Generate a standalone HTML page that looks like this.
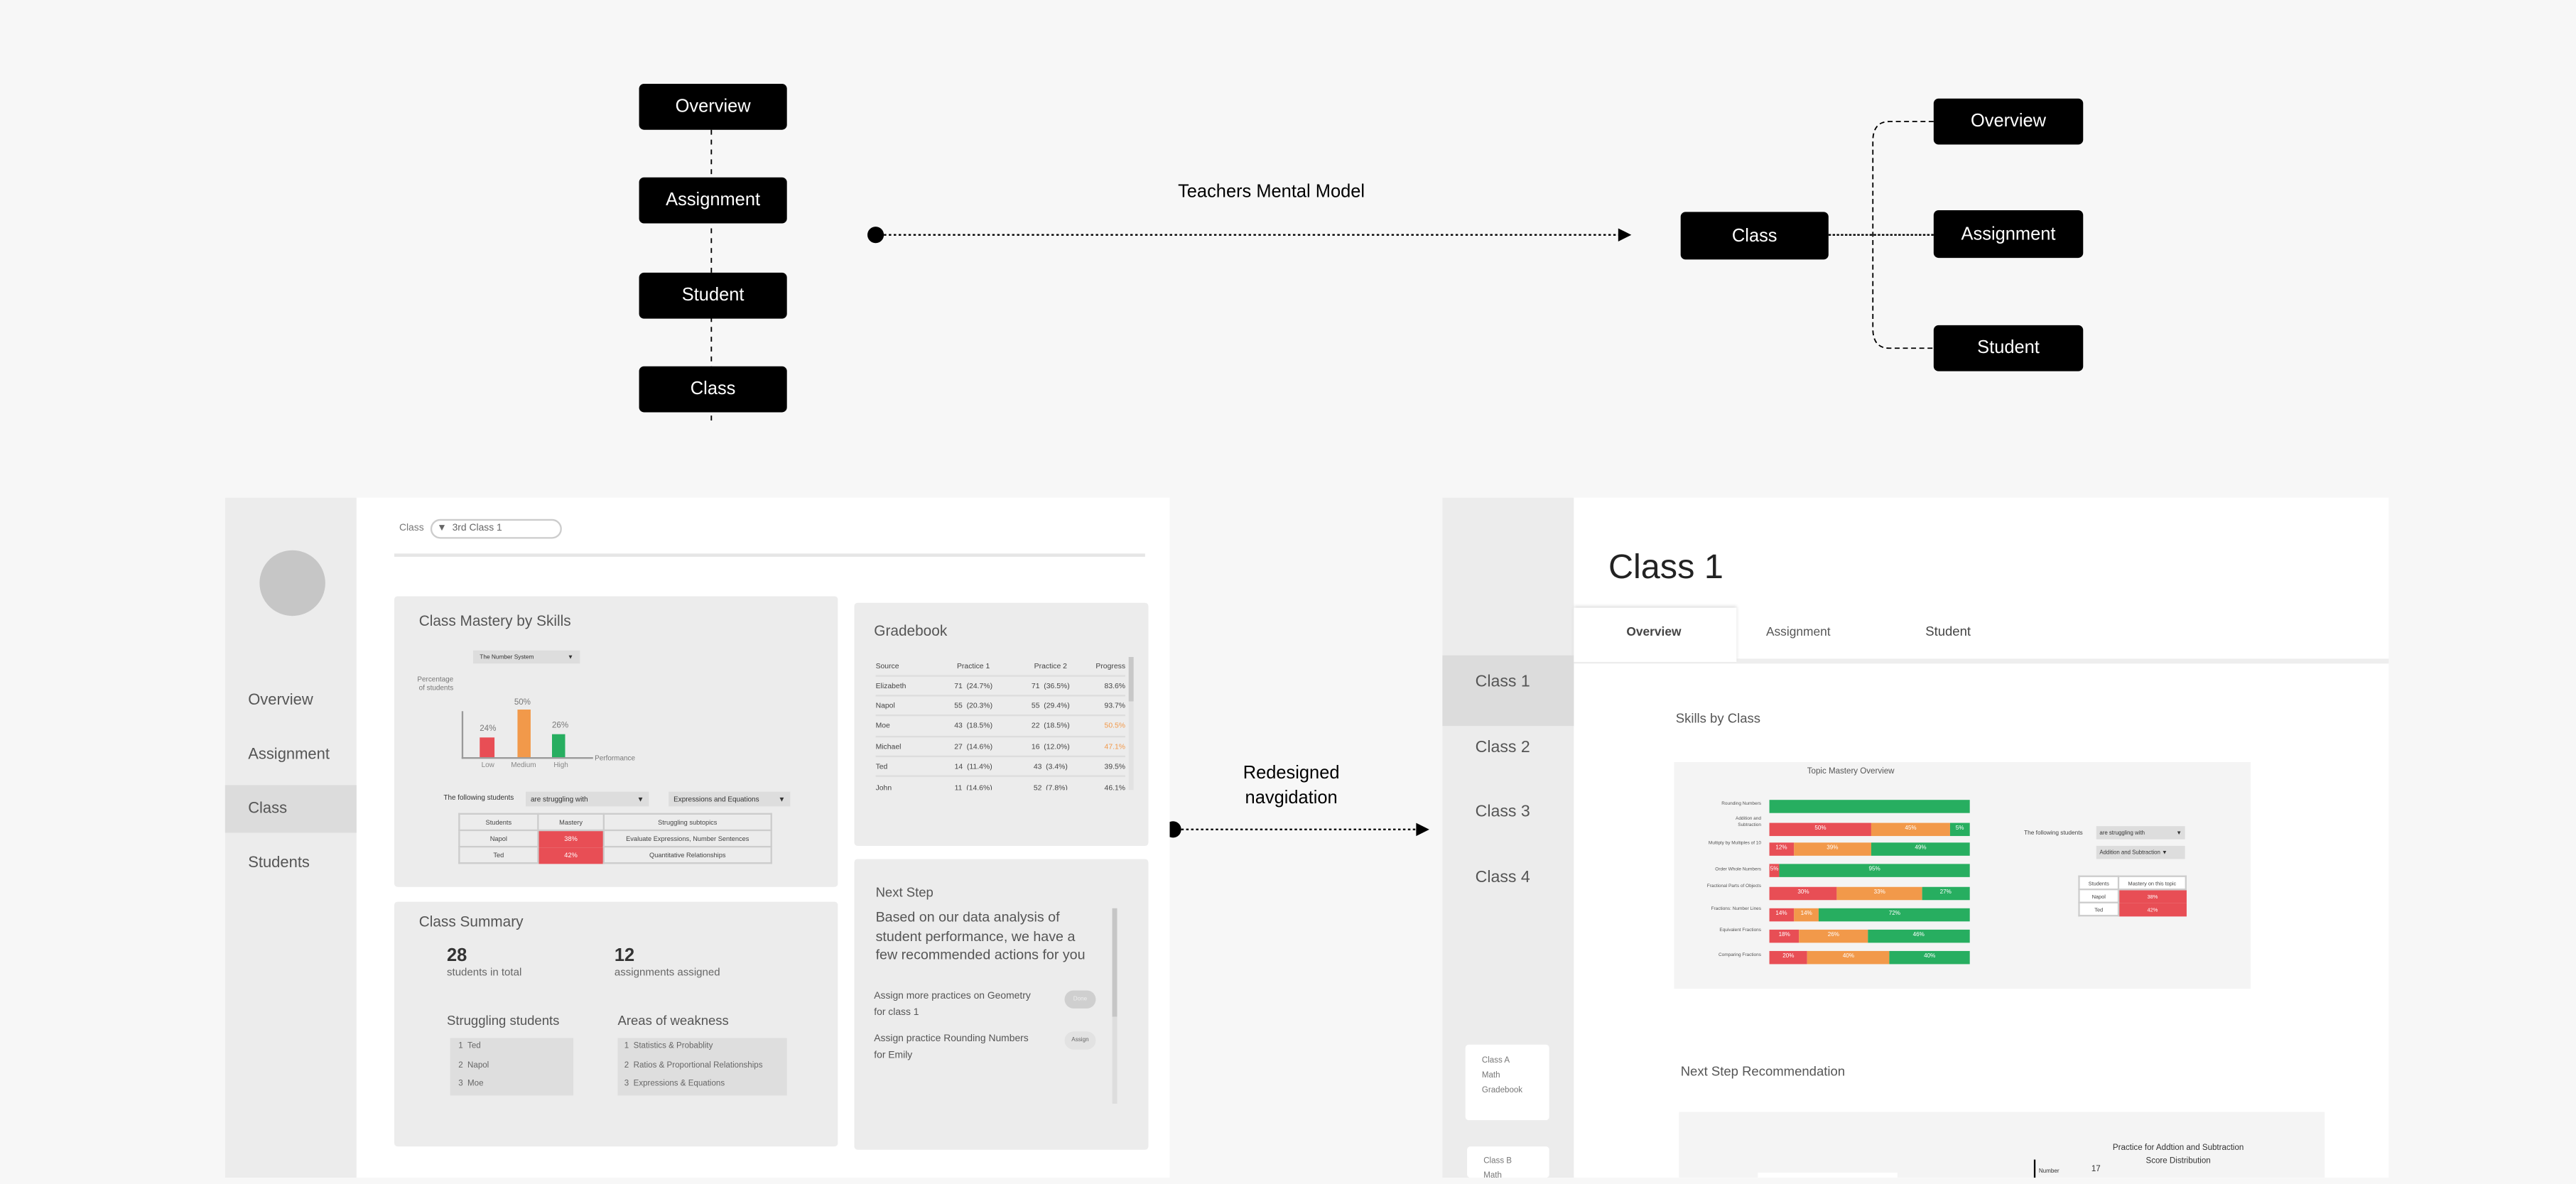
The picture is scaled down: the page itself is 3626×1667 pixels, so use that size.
<!DOCTYPE html>
<html><head><meta charset="utf-8"><style>
*{margin:0;padding:0;box-sizing:border-box}
html,body{width:3626px;height:1657px;overflow:hidden;background:#f7f7f7}
#w{position:absolute;left:0;top:0;width:1568px;height:717px;transform:scale(2.3125);transform-origin:0 0;font-family:"Liberation Sans",sans-serif;}
.a{position:absolute}
.bx{position:absolute;background:#000;color:#fff;border-radius:3px;font-size:11px;display:flex;align-items:center;justify-content:center}
.t{position:absolute;white-space:nowrap;color:#555}
.card{position:absolute;background:#ececec;border-radius:2px}
.gb{font-size:4.5px;color:#444}
.bar{position:absolute;height:7.5px;display:flex;font-size:3.5px;color:#fff;line-height:7.5px}
.bar div{text-align:center}
.r{background:#e84e55}.o{background:#f2994a}.g{background:#27ae60}
</style></head><body><div id="w">

<svg class="a" style="left:0;top:0" width="1568" height="300">
<line x1="433" y1="79" x2="433" y2="256" stroke="#000" stroke-width="0.8" stroke-dasharray="3,3"/>
<circle cx="533" cy="143" r="5" fill="#000"/>
<line x1="538" y1="143" x2="986" y2="143" stroke="#000" stroke-width="1" stroke-dasharray="1.5,1.5"/>
<polygon points="985,139 993,143 985,147" fill="#000"/>
<line x1="1113" y1="143" x2="1177" y2="143" stroke="#000" stroke-width="1" stroke-dasharray="1.5,1"/>
<path d="M1177 74 H1150 Q1140 74 1140 86 V200 Q1140 212 1150 212 H1177" fill="none" stroke="#000" stroke-width="0.8" stroke-dasharray="3,2"/>
</svg>
<div class="bx" style="left:389px;top:51px;width:90px;height:28px">Overview</div>
<div class="bx" style="left:389px;top:108px;width:90px;height:28px">Assignment</div>
<div class="bx" style="left:389px;top:166px;width:90px;height:28px">Student</div>
<div class="bx" style="left:389px;top:223px;width:90px;height:28px">Class</div>
<div class="t" style="left:717px;top:111px;font-size:11px;color:#000">Teachers Mental Model</div>
<div class="bx" style="left:1023px;top:129px;width:90px;height:29px">Class</div>
<div class="bx" style="left:1177px;top:60px;width:91px;height:28px">Overview</div>
<div class="bx" style="left:1177px;top:128px;width:91px;height:29px">Assignment</div>
<div class="bx" style="left:1177px;top:198px;width:91px;height:28px">Student</div>

<div class="t" style="left:740px;top:464px;width:92px;text-align:center;font-size:11px;color:#000;line-height:15px">Redesigned<br>navgidation</div>
<svg class="a" style="left:700px;top:495px" width="180" height="20">
<circle cx="14" cy="10" r="5" fill="#000"/>
<line x1="19" y1="10" x2="162" y2="10" stroke="#000" stroke-width="1" stroke-dasharray="1.5,1.5"/>
<polygon points="162,6 170,10 162,14" fill="#000"/>
</svg>

<div class="a" style="left:137px;top:303px;width:575px;height:414px;background:#fff"></div>
<div class="a" style="left:137px;top:303px;width:80px;height:414px;background:#ececec"></div>
<div class="a" style="left:158px;top:335px;width:40px;height:40px;border-radius:50%;background:#c6c6c6"></div>
<div class="a" style="left:137px;top:478px;width:80px;height:29px;background:#dcdcdc"></div>
<div class="t" style="left:151px;top:421px;font-size:9.5px">Overview</div>
<div class="t" style="left:151px;top:454px;font-size:9.5px">Assignment</div>
<div class="t" style="left:151px;top:487px;font-size:9.5px">Class</div>
<div class="t" style="left:151px;top:520px;font-size:9.5px">Students</div>
<div class="t" style="left:243px;top:319px;font-size:6px;color:#777">Class</div>
<div class="a" style="left:262px;top:316px;width:80px;height:12px;border:1px solid #ccc;border-radius:6px;background:#fff"></div>
<div class="t" style="left:266px;top:319px;font-size:6px;color:#666">▼&nbsp;&nbsp;3rd Class 1</div>
<div class="a" style="left:240px;top:337px;width:457px;height:1.5px;background:#e6e6e6"></div>

<div class="card" style="left:240px;top:363px;width:270px;height:177px"></div>
<div class="t" style="left:255px;top:373px;font-size:9px">Class Mastery by Skills</div>
<div class="a" style="left:288px;top:396px;width:65px;height:8px;background:#ddd;font-size:3.6px;color:#333;padding:2px 4px">The Number System<span style="float:right">▼</span></div>
<div class="t" style="left:254px;top:411px;font-size:4.3px;color:#777;line-height:5px;text-align:right">Percentage<br>of students</div>
<div class="a" style="left:281px;top:433px;width:0.8px;height:29px;background:#999"></div>
<div class="a" style="left:281px;top:461px;width:80px;height:0.8px;background:#999"></div>
<div class="t" style="left:362px;top:459px;font-size:4.3px;color:#777">Performance</div>
<div class="a r" style="left:292px;top:449px;width:9px;height:12px"></div>
<div class="a o" style="left:315px;top:432px;width:8px;height:29px"></div>
<div class="a g" style="left:336px;top:447px;width:8px;height:14px"></div>
<div class="t" style="left:292px;top:441px;font-size:5px;color:#777">24%</div>
<div class="t" style="left:313px;top:425px;font-size:5px;color:#777">50%</div>
<div class="t" style="left:336px;top:439px;font-size:5px;color:#777">26%</div>
<div class="t" style="left:293px;top:463px;font-size:4.3px;color:#888">Low</div>
<div class="t" style="left:311px;top:463px;font-size:4.3px;color:#888">Medium</div>
<div class="t" style="left:337px;top:463px;font-size:4.3px;color:#888">High</div>
<div class="t" style="left:270px;top:483px;font-size:4.3px;color:#333">The following students</div>
<div class="a" style="left:320px;top:482px;width:75px;height:9px;background:#ddd;font-size:4.3px;color:#333;padding:2px 3px">are struggling with<span style="float:right">▼</span></div>
<div class="a" style="left:407px;top:482px;width:74px;height:9px;background:#ddd;font-size:4.3px;color:#333;padding:2px 3px">Expressions and Equations<span style="float:right">▼</span></div>
<table class="a" style="left:279px;top:495px;width:191px;border-collapse:collapse;font-size:4px;color:#444;text-align:center">
<tr style="height:10px"><td style="border:0.6px solid #ccc;width:48px">Students</td><td style="border:0.6px solid #ccc;width:40px">Mastery</td><td style="border:0.6px solid #ccc">Struggling subtopics</td></tr>
<tr style="height:10px"><td style="border:0.6px solid #ccc">Napol</td><td class="r" style="color:#fff">38%</td><td style="border:0.6px solid #ccc">Evaluate Expressions, Number Sentences</td></tr>
<tr style="height:10px"><td style="border:0.6px solid #ccc">Ted</td><td class="r" style="color:#fff">42%</td><td style="border:0.6px solid #ccc">Quantitative Relationships</td></tr>
</table>

<div class="card" style="left:520px;top:367px;width:179px;height:148px"></div>
<div class="t" style="left:532px;top:379px;font-size:9px">Gradebook</div>
<div class="a" style="left:687px;top:400px;width:3px;height:81px;background:#e2e2e2"></div>
<div class="a" style="left:687px;top:400px;width:3px;height:27px;background:#c8c8c8"></div>
<div class="a gb" style="left:533px;top:400px;width:152px;height:81px;overflow:hidden">
<div style="display:flex;height:12px;align-items:center;border-bottom:0.6px solid #ddd"><span style="width:36px">Source</span><span style="width:47px;text-align:center">Practice 1</span><span style="width:47px;text-align:center">Practice 2</span><span style="flex:1;text-align:right">Progress</span></div>
<div style="display:flex;height:12.2px;align-items:center;border-bottom:0.6px solid #ddd"><span style="width:36px">Elizabeth</span><span style="width:47px;text-align:center">71 &nbsp;(24.7%)</span><span style="width:47px;text-align:center">71 &nbsp;(36.5%)</span><span style="flex:1;text-align:right">83.6%</span></div>
<div style="display:flex;height:12.2px;align-items:center;border-bottom:0.6px solid #ddd"><span style="width:36px">Napol</span><span style="width:47px;text-align:center">55 &nbsp;(20.3%)</span><span style="width:47px;text-align:center">55 &nbsp;(29.4%)</span><span style="flex:1;text-align:right">93.7%</span></div>
<div style="display:flex;height:12.2px;align-items:center;border-bottom:0.6px solid #ddd"><span style="width:36px">Moe</span><span style="width:47px;text-align:center">43 &nbsp;(18.5%)</span><span style="width:47px;text-align:center">22 &nbsp;(18.5%)</span><span style="flex:1;text-align:right;color:#f2994a">50.5%</span></div>
<div style="display:flex;height:12.2px;align-items:center;border-bottom:0.6px solid #ddd"><span style="width:36px">Michael</span><span style="width:47px;text-align:center">27 &nbsp;(14.6%)</span><span style="width:47px;text-align:center">16 &nbsp;(12.0%)</span><span style="flex:1;text-align:right;color:#f2994a">47.1%</span></div>
<div style="display:flex;height:12.2px;align-items:center;border-bottom:0.6px solid #ddd"><span style="width:36px">Ted</span><span style="width:47px;text-align:center">14 &nbsp;(11.4%)</span><span style="width:47px;text-align:center">43 &nbsp;(3.4%)</span><span style="flex:1;text-align:right">39.5%</span></div>
<div style="display:flex;height:12.2px;align-items:center"><span style="width:36px">John</span><span style="width:47px;text-align:center">11 &nbsp;(14.6%)</span><span style="width:47px;text-align:center">52 &nbsp;(7.8%)</span><span style="flex:1;text-align:right">46.1%</span></div>
</div>

<div class="card" style="left:240px;top:549px;width:270px;height:149px"></div>
<div class="t" style="left:255px;top:556px;font-size:9px">Class Summary</div>
<div class="t" style="left:272px;top:576px;font-size:11px;font-weight:bold;color:#333">28</div>
<div class="t" style="left:272px;top:589px;font-size:6.5px;color:#666">students in total</div>
<div class="t" style="left:374px;top:576px;font-size:11px;font-weight:bold;color:#333">12</div>
<div class="t" style="left:374px;top:589px;font-size:6.5px;color:#666">assignments assigned</div>
<div class="t" style="left:272px;top:617px;font-size:8px">Struggling students</div>
<div class="t" style="left:376px;top:617px;font-size:8px">Areas of weakness</div>
<div class="a" style="left:274px;top:632px;width:75px;height:35px;background:#dedede;font-size:5px;color:#666;line-height:11.5px;padding-left:5px">1 &nbsp;Ted<br>2 &nbsp;Napol<br>3 &nbsp;Moe</div>
<div class="a" style="left:376px;top:632px;width:103px;height:35px;background:#dedede;font-size:5px;color:#666;line-height:11.5px;padding-left:4px">1 &nbsp;Statistics &amp; Probablity<br>2 &nbsp;Ratios &amp; Proportional Relationships<br>3 &nbsp;Expressions &amp; Equations</div>

<div class="card" style="left:520px;top:523px;width:179px;height:177px"></div>
<div class="t" style="left:533px;top:539px;font-size:8px">Next Step</div>
<div class="t" style="left:533px;top:553px;font-size:8.5px;line-height:11.5px;color:#555">Based on our data analysis of<br>student performance, we have a<br>few recommended actions for you</div>
<div class="a" style="left:677px;top:553px;width:3px;height:119px;background:#ddd"></div>
<div class="a" style="left:677px;top:553px;width:3px;height:66px;background:#c6c6c6"></div>
<div class="t" style="left:532px;top:603px;font-size:6px;line-height:9.5px">Assign more practices on Geometry<br>for class 1</div>
<div class="a" style="left:648px;top:603px;width:19px;height:11px;border-radius:6px;background:#cfcfcf;font-size:3.5px;color:#eee;text-align:center;line-height:11px">Done</div>
<div class="t" style="left:532px;top:629px;font-size:6px;line-height:9.5px">Assign practice Rounding Numbers<br>for Emily</div>
<div class="a" style="left:648px;top:628px;width:19px;height:11px;border-radius:6px;background:#e2e2e2;font-size:3.5px;color:#666;text-align:center;line-height:11px">Assign</div>

<div class="a" style="left:878px;top:303px;width:576px;height:414px;background:#fff"></div>
<div class="a" style="left:878px;top:303px;width:80px;height:414px;background:#ececec"></div>
<div class="a" style="left:878px;top:399px;width:80px;height:43px;background:#dcdcdc"></div>
<div class="t" style="left:898px;top:410px;font-size:10px">Class 1</div>
<div class="t" style="left:898px;top:450px;font-size:10px">Class 2</div>
<div class="t" style="left:898px;top:489px;font-size:10px">Class 3</div>
<div class="t" style="left:898px;top:529px;font-size:10px">Class 4</div>
<div class="a" style="left:892px;top:636px;width:51px;height:46px;background:#fff;border-radius:2px;font-size:5px;color:#777;line-height:9px;padding:6px 0 0 10px">Class A<br>Math<br>Gradebook</div>
<div class="a" style="left:893px;top:698px;width:50px;height:19px;background:#fff;border-radius:2px;font-size:5px;color:#777;line-height:9px;padding:5px 0 0 10px">Class B<br>Math</div>
<div class="t" style="left:979px;top:334px;font-size:21px;color:#222">Class 1</div>
<div class="a" style="left:958px;top:401px;width:496px;height:3px;background:#eee"></div>
<div class="a" style="left:958px;top:370px;width:99px;height:33px;background:#fff;box-shadow:0 -1px 2px #ddd"></div>
<div class="t" style="left:990px;top:380px;font-size:7.5px;font-weight:bold;color:#444">Overview</div>
<div class="t" style="left:1075px;top:380px;font-size:7.5px;color:#555">Assignment</div>
<div class="t" style="left:1172px;top:380px;font-size:8px;color:#444">Student</div>
<div class="t" style="left:1020px;top:433px;font-size:8px">Skills by Class</div>
<div class="a" style="left:1019px;top:464px;width:351px;height:138px;background:#f4f4f4"></div>
<div class="t" style="left:1100px;top:467px;font-size:5px;color:#555">Topic Mastery Overview</div>
<div class="a" style="left:1020px;top:487px;width:52px;font-size:2.8px;color:#555;text-align:right">
<div style="position:absolute;right:0;top:0">Rounding Numbers</div>
<div style="position:absolute;right:0;top:10px;line-height:3.5px">Addition and<br>Subtraction</div>
<div style="position:absolute;right:0;top:24px">Multiply by Multiples of 10</div>
<div style="position:absolute;right:0;top:40px">Order Whole Numbers</div>
<div style="position:absolute;right:0;top:50px">Fractional Parts of Objects</div>
<div style="position:absolute;right:0;top:64px">Fractions: Number Lines</div>
<div style="position:absolute;right:0;top:77px">Equivalent Fractions</div>
<div style="position:absolute;right:0;top:92px">Comparing Fractions</div>
</div>
<div class="bar" style="left:1077px;top:487px;width:122px"><div class="g" style="width:100%"></div></div>
<div class="bar" style="left:1077px;top:501px;width:122px"><div class="r" style="width:51%">50%</div><div class="o" style="width:39%">45%</div><div class="g" style="width:10%">5%</div></div>
<div class="bar" style="left:1077px;top:513px;width:122px"><div class="r" style="width:12%">12%</div><div class="o" style="width:39%">39%</div><div class="g" style="width:49%">49%</div></div>
<div class="bar" style="left:1077px;top:526px;width:122px"><div class="r" style="width:5%">5%</div><div class="g" style="width:95%">95%</div></div>
<div class="bar" style="left:1077px;top:540px;width:122px"><div class="r" style="width:34%">30%</div><div class="o" style="width:42%">33%</div><div class="g" style="width:24%">27%</div></div>
<div class="bar" style="left:1077px;top:553px;width:122px"><div class="r" style="width:12%">14%</div><div class="o" style="width:13%">14%</div><div class="g" style="width:75%">72%</div></div>
<div class="bar" style="left:1077px;top:566px;width:122px"><div class="r" style="width:15%">18%</div><div class="o" style="width:34%">26%</div><div class="g" style="width:51%">46%</div></div>
<div class="bar" style="left:1077px;top:579px;width:122px"><div class="r" style="width:19%">20%</div><div class="o" style="width:41%">40%</div><div class="g" style="width:40%">40%</div></div>
<div class="t" style="left:1232px;top:505px;font-size:3.6px;color:#444">The following students</div>
<div class="a" style="left:1276px;top:503px;width:54px;height:8px;background:#ddd;font-size:3.4px;color:#333;padding:2px 2px">are struggling with<span style="float:right">▼</span></div>
<div class="a" style="left:1276px;top:515px;width:54px;height:8px;background:#ddd;font-size:3.4px;color:#333;padding:2px 2px">Addition and Subtraction ▼</div>
<table class="a" style="left:1265px;top:533px;width:66px;border-collapse:collapse;font-size:3.2px;color:#444;text-align:center;background:#fff">
<tr style="height:8px"><td style="border:0.5px solid #ccc;width:24px">Students</td><td style="border:0.5px solid #ccc">Mastery on this topic</td></tr>
<tr style="height:8px"><td style="border:0.5px solid #ccc">Napol</td><td class="r" style="color:#fff">38%</td></tr>
<tr style="height:8px"><td style="border:0.5px solid #ccc">Ted</td><td class="r" style="color:#fff">42%</td></tr>
</table>
<div class="t" style="left:1023px;top:648px;font-size:8px">Next Step Recommendation</div>
<div class="a" style="left:1022px;top:677px;width:393px;height:40px;background:#f4f4f4"></div>
<div class="t" style="left:1286px;top:696px;font-size:5px;color:#333;text-align:center;line-height:7.5px">Practice for Addtion and Subtraction<br>Score Distribution</div>
<div class="a" style="left:1238px;top:706px;width:0.8px;height:11px;background:#000"></div>
<div class="t" style="left:1241px;top:711px;font-size:3.5px;color:#333">Number</div>
<div class="t" style="left:1273px;top:709px;font-size:5px;color:#333">17</div>
<div class="a" style="left:1070px;top:714px;width:85px;height:3px;background:#fff"></div>

</div></body></html>
